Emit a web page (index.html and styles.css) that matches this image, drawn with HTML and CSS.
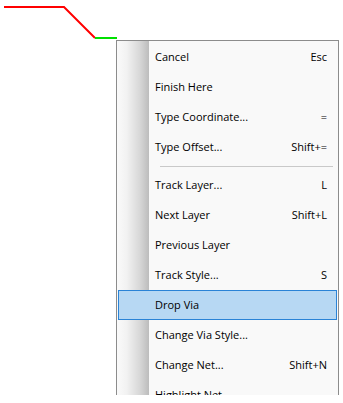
FILE: index.html
```html
<!DOCTYPE html>
<html>
<head>
<meta charset="utf-8">
<link rel="stylesheet" href="styles.css">
</head>
<body>
<div class="canvas">
  <svg class="tracks" width="343" height="40" viewBox="0 0 343 40">
    <polyline points="4,7 64,7 95,38" fill="none" stroke="#ff0000" stroke-width="2"/>
    <line x1="95" y1="38" x2="117" y2="38" stroke="#00e000" stroke-width="2"/>
  </svg>
</div>
<div class="menu">
  <div class="strip"></div>
  <ul class="items">
    <li class="item"><span>Cancel</span><span>Esc</span></li>
    <li class="item"><span>Finish Here</span></li>
    <li class="item"><span>Type Coordinate...</span><span>=</span></li>
    <li class="item"><span>Type Offset...</span><span>Shift+=</span></li>
    <li class="sep"></li>
    <li class="item"><span>Track Layer...</span><span>L</span></li>
    <li class="item"><span>Next Layer</span><span>Shift+L</span></li>
    <li class="item"><span>Previous Layer</span></li>
    <li class="item"><span>Track Style...</span><span>S</span></li>
    <li class="item active"><span>Drop Via</span></li>
    <li class="item"><span>Change Via Style...</span></li>
    <li class="item"><span>Change Net...</span><span>Shift+N</span></li>
    <li class="item"><span>Highlight Net</span></li>
  </ul>
</div>
</body>
</html>
```
FILE: styles.css
```css
html, body {
  margin: 0;
  padding: 0;
  background: #ffffff;
}
body {
  width: 343px;
  height: 403px;
  overflow: hidden;
  font-family: "Open Sans", "Noto Sans", sans-serif;
  font-size: 11px;
  color: #000;
}
.canvas {
  height: 40px;
}
.tracks {
  display: block;
}
.menu {
  position: relative;
  margin-left: 116px;
  width: 221px;
  height: 354px;
  overflow: hidden;
  border: 1px solid #8c8c8c;
  border-bottom: none;
  background: #f9f9f9;
}
.strip {
  position: absolute;
  left: 0;
  top: 0;
  bottom: 0;
  width: 32px;
  background: linear-gradient(to right, #fafafa 0%, #f2f2f2 30%, #d8d8d8 70%, #bcbcbc 100%);
}
.items {
  position: relative;
  list-style: none;
  margin: 0;
  padding: 1px 0 0 0;
}
.item {
  display: flex;
  justify-content: space-between;
  align-items: center;
  height: 30px;
  margin: 0 1px;
  padding: 0 10px 1px 37px;
  box-sizing: border-box;
  white-space: nowrap;
}
.item.active {
  background: #b7d8f3;
  border: 1px solid #2a83d6;
  padding: 0 9px 1px 36px;
}
.sep {
  height: 8px;
  display: flex;
  align-items: center;
  padding: 0 5px 0 43px;
}
.sep::before {
  content: "";
  display: block;
  flex: 1;
  height: 1px;
  background: #c9c9c9;
}
```
